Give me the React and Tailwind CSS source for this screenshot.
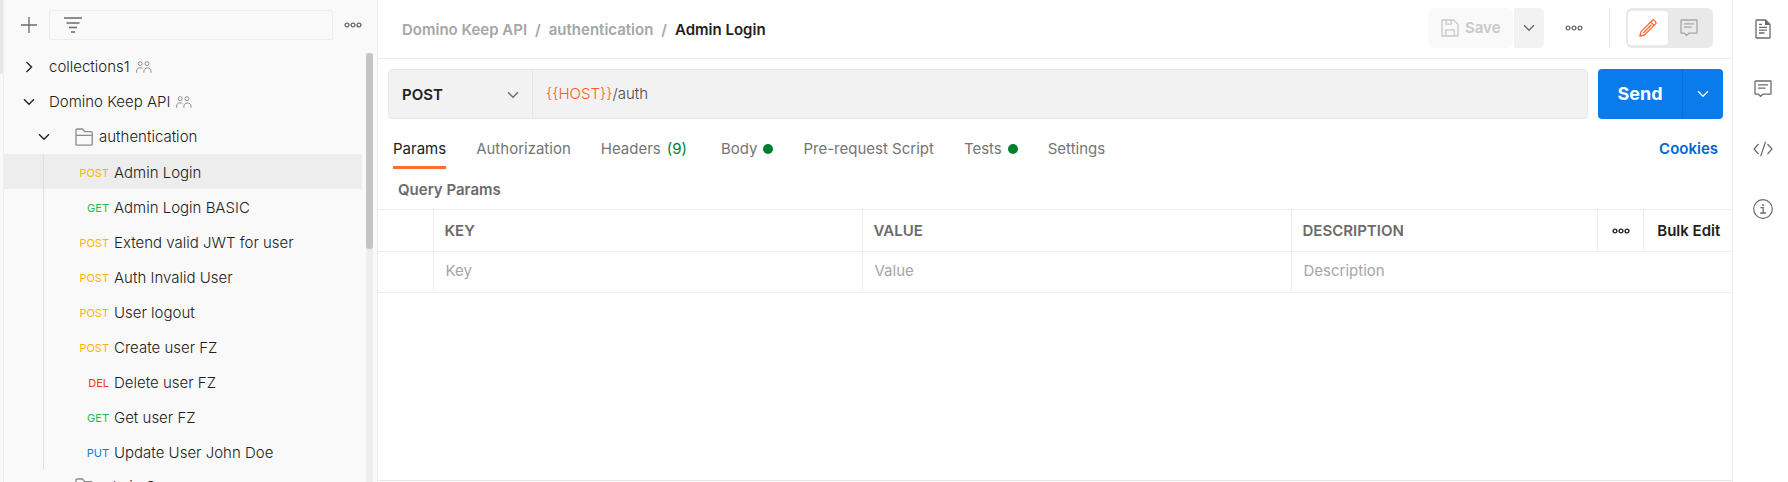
import React from "react";

const COLORS = {
  POST: "text-[#ffb400]",
  GET: "text-[#1db954]",
  DEL: "text-[#f0352b]",
  PUT: "text-[#097bed]",
};

const REQUESTS = [
  ["POST", "Admin Login"],
  ["GET", "Admin Login BASIC"],
  ["POST", "Extend valid JWT for user"],
  ["POST", "Auth Invalid User"],
  ["POST", "User logout"],
  ["POST", "Create user FZ"],
  ["DEL", "Delete user FZ"],
  ["GET", "Get user FZ"],
  ["PUT", "Update User John Doe"],
];

function Svg({ w, h, children, className = "" }) {
  return (
    <svg
      width={w}
      height={h}
      viewBox={`0 0 ${w} ${h}`}
      fill="none"
      stroke="currentColor"
      className={`shrink-0 ${className}`}
      aria-hidden="true"
    >
      {children}
    </svg>
  );
}

const Chevron = ({ className }) => (
  <Svg w={12} h={8} className={className}>
    <path d="M1 1.2 6 6.2 11 1.2" strokeWidth="1.4" />
  </Svg>
);

const ChevronRight = ({ className }) => (
  <Svg w={12} h={12} className={className}>
    <path d="M3.5 1 8.5 6 3.5 11" strokeWidth="1.4" />
  </Svg>
);

const Dots = ({ className }) => (
  <Svg w={18} h={6} className={className}>
    <g strokeWidth="1.4">
      <circle cx="3" cy="3" r="1.9" />
      <circle cx="9" cy="3" r="1.9" />
      <circle cx="15" cy="3" r="1.9" />
    </g>
  </Svg>
);

const People = () => (
  <Svg w={16} h={12} className="text-[#8f8f8f]">
    <circle cx="4.2" cy="2.6" r="2" />
    <circle cx="11" cy="2.6" r="2" />
    <path d="M.7 11.8V10C.7 7.9 2 6.8 4 6.8c1 0 1.8.3 2.4.8M7.9 11.8V10.2c0-2 1.4-3.2 3.5-3.2s3.6 1.2 3.6 3.2v1.6" />
  </Svg>
);

const Folder = () => (
  <Svg w={18} h={18} className="text-[#8a8a8a]">
    <path
      d="M1 15.6V2.2C1 1.3 1.3 1 2.2 1h5.200l2.400 2.600h6.200c.9 0 1.200.3 1.200 1.200v11.200c0 .9-.3 1.200-1.200 1.200H2.200c-.9 0-1.200-.3-1.200-1.200zM1 7.300h16.200"
      strokeWidth="1.3"
    />
  </Svg>
);

const Comment = ({ className }) => (
  <Svg w={18} h={18} className={className}>
    <path
      d="M1.6 1h14.8c.4 0 .6.2.6.6v12c0 .4-.2.6-.6.6H8.800L6.600 16.400 4.400 14.200H1.600c-.4 0-.6-.2-.6-.6v-12c0-.4.200-.6.600-.6zM4 4.900h10M4 8.200h7.500"
      strokeWidth="1.3"
    />
  </Svg>
);

const Disk = () => (
  <Svg w={18} h={18}>
    <path
      d="M1 1h11.5L17 5.5V17H1zM4.8 17v-6.2h8.400V17M5 1v4.200h5.200V1"
      strokeWidth="1.3"
      strokeLinejoin="round"
    />
  </Svg>
);

const Pencil = () => (
  <Svg w={18} h={18} className="text-[#ff6c37]">
    <path
      d="M.8 17.2 2 12.600 12.900 1.700c.9-.9 1.700-.9 2.500-.1l1 1c.8.8.8 1.600-.1 2.500L5.400 16zM11.600 3l3.400 3.400M4.200 14 12.400 5.800"
      strokeWidth="1.3"
      strokeLinejoin="round"
    />
  </Svg>
);

const Doc = () => (
  <Svg w={16} h={20}>
    <path
      d="M1.6 1H10.5L15 5.5V18.4c0 .4-.2.6-.6.6H1.600c-.4 0-.6-.2-.6-.6V1.600C1 1.200 1.200 1 1.600 1zM4 5.300h3M4 8.400h8M4 11.200h8M4 14h5.500"
      strokeWidth="1.3"
    />
    <path d="M10 .8V6h5.200z" fill="currentColor" stroke="none" />
  </Svg>
);

const Code = () => (
  <Svg w={20} h={16}>
    <path d="M5.500 3 1 8l4.500 5M14.500 3 19 8l-4.500 5M12.500.8 7.700 15.200" strokeWidth="1.2" />
  </Svg>
);

const Info = () => (
  <Svg w={20} h={20}>
    <circle cx="10" cy="10" r="9.3" strokeWidth="1.2" />
    <path d="M7.500 8.700h2.700v5M7.200 14h5.800" strokeWidth="1.3" />
    <circle cx="10" cy="6" r="1" fill="currentColor" stroke="none" />
  </Svg>
);

const Dot = () => <span className="h-2.5 w-2.5 rounded-full bg-[#007f31]" />;

function Tab({ active, children }) {
  return (
    <button
      role="tab"
      aria-selected={!!active}
      className={`flex h-10 items-center gap-1.5 border-b-3 pt-0.5 ${
        active ? "border-[#ff6c37] text-[#212121]" : "border-transparent text-[#757575]"
      }`}
    >
      {children}
    </button>
  );
}

function Sidebar() {
  return (
    <aside className="flex w-[378px] shrink-0 border-r border-[#ededed] bg-[#f9f9f9]">
      <div className="flex w-1 shrink-0 flex-col border-r border-[#ededed]">
        <div className="h-[74px] bg-[#e6e6e6]" />
      </div>
      <div className="flex min-w-0 flex-1 flex-col">
        <div className="flex h-[49px] shrink-0 items-center">
          <button aria-label="New" className="flex w-[45px] shrink-0 justify-center pl-[5px] text-[#6b6b6b]">
            <Svg w={16} h={16}>
              <path d="M8 0v16M0 8h16" strokeWidth="1.3" />
            </Svg>
          </button>
          <label className="flex h-[30px] min-w-0 flex-1 items-center rounded-xs border border-[#ededed] pl-3.5">
            <Svg w={18} h={16} className="text-[#6b6b6b]">
              <path d="M0 1h18M2.5 6h13M5 10.5h8M7 15h4" strokeWidth="1.3" />
            </Svg>
            <input aria-label="Filter" className="min-w-0 flex-1 bg-transparent px-2 outline-none" />
          </label>
          <button aria-label="More" className="mr-[15px] ml-[11px] text-[#6b6b6b]">
            <Dots />
          </button>
        </div>
        <div className="flex min-h-0 flex-1">
          <ul className="min-w-0 flex-1 overflow-hidden font-light text-[#212121]">
            <li className="flex h-[35px] items-center pt-px">
              <span className="flex w-[45px] justify-center pl-1">
                <ChevronRight />
              </span>
              collections1
              <span className="ml-1.5"><People /></span>
            </li>
            <li>
              <div className="flex h-[35px] items-center pt-px">
                <span className="flex w-[45px] justify-center pl-1">
                  <Chevron />
                </span>
                Domino Keep API
                <span className="ml-1.5"><People /></span>
              </div>
              <ul>
                <li>
                  <div className="flex h-[35px] items-center pt-px pl-[34px]">
                    <Chevron />
                    <span className="mr-1.5 ml-[25px]"><Folder /></span>
                    authentication
                  </div>
                  <ul>
                    {REQUESTS.map(([method, name], i) => (
                      <li key={name} className={`flex h-[35px] pl-[39px] ${i === 0 ? "bg-[#ededed]" : ""}`}>
                        <a href="#request" className="flex flex-1 items-center border-l border-[#e0e0e0] pt-0.5">
                          <span className={`w-[65px] text-right text-[11px] font-normal ${COLORS[method]}`}>{method}</span>
                          <span className="ml-[5px]">{name}</span>
                        </a>
                      </li>
                    ))}
                  </ul>
                </li>
                <li className="flex h-[35px] items-center pt-px pl-[71px]">
                  <span className="mr-1.5"><Folder /></span>
                  admin Scope
                </li>
              </ul>
            </li>
          </ul>
          <div className="mx-1 mt-1 w-[7px] shrink-0 bg-[#ededed]">
            <div className="h-[196px] rounded-[3px] bg-[#c4c4c4]" />
          </div>
        </div>
      </div>
    </aside>
  );
}

function Header() {
  return (
    <header className="flex h-[59px] shrink-0 items-center border-b border-[#ededed] pr-[19px] pb-0.5 pl-6">
      <nav aria-label="Breadcrumb" className="flex flex-1 gap-2 pt-1 font-semibold text-[#a6a6a6]">
        <a href="#collection">Domino Keep API</a>
        <span>/</span>
        <a href="#folder">authentication</a>
        <span>/</span>
        <span className="text-[#212121]">Admin Login</span>
      </nav>
      <button disabled className="flex h-10 w-[85px] items-center gap-1.5 rounded-md bg-[#f9f9f9] pl-[13px] font-semibold text-[#c8c8c8]">
        <Disk />
        Save
      </button>
      <button aria-label="Save options" className="ml-px flex h-10 w-[30px] items-center justify-center rounded-r-md bg-[#f2f2f2] text-[#6b6b6b]">
        <Chevron />
      </button>
      <button aria-label="More actions" className="mx-[21px] text-[#6b6b6b]">
        <Dots />
      </button>
      <div className="ml-[5px] h-10 w-px bg-[#e6e6e6]" />
      <div className="ml-4 flex h-10 w-[87px] rounded-md bg-[#e9e9e9] p-0.5">
        <button aria-label="Edit" className="my-px flex w-10 items-center justify-center rounded bg-white">
          <Pencil />
        </button>
        <button aria-label="Comments" className="flex flex-1 items-center justify-center pr-px text-[#a6a6a6]">
          <Comment />
        </button>
      </div>
    </header>
  );
}

const cell = "border-r border-[#ededed] px-[11px] text-left";
const field = "w-full bg-transparent pb-0.5 pl-px outline-none placeholder:text-[#a6a6a6]";

function Main() {
  return (
    <main className="flex min-w-0 flex-1 flex-col">
      <Header />
      <div className="flex pt-2.5 pr-[9px] pl-2.5">
        <div className="flex h-[50px] flex-1 rounded border border-[#e6e6e6] bg-[#f2f2f2]">
          <button className="flex w-[144px] items-center justify-between border-r border-[#e6e6e6] px-[13px] pt-px font-semibold text-[#212121]">
            POST
            <Chevron className="text-[#6b6b6b]" />
          </button>
          <div
            role="textbox"
            aria-label="Request URL"
            contentEditable
            suppressContentEditableWarning
            className="flex flex-1 items-center pl-[13px] font-light text-[#4a4a4a] outline-none"
          >
            <span className="text-[#ff5a1f]">{"{{HOST}}"}</span>/auth
          </div>
        </div>
        <div className="ml-2.5 flex h-[50px] overflow-hidden rounded bg-[#097bed] text-white">
          <button className="w-[84px] text-lg font-bold">Send</button>
          <button aria-label="Send options" className="flex w-[41px] items-center justify-center border-l border-[#066fd9]">
            <Chevron />
          </button>
        </div>
      </div>
      <div className="flex items-center justify-between pt-2.5 pr-3.5 pl-[15px]">
        <div role="tablist" className="flex gap-[30px]">
          <Tab active>Params</Tab>
          <Tab>Authorization</Tab>
          <Tab>
            Headers <span className="pr-1 text-[#007f31]">(9)</span>
          </Tab>
          <Tab>
            Body <Dot />
          </Tab>
          <Tab>Pre-request Script</Tab>
          <Tab>
            Tests <Dot />
          </Tab>
          <Tab>Settings</Tab>
        </div>
        <a href="#cookies" className="font-semibold text-[#0265d2]">Cookies</a>
      </div>
      <h2 className="flex h-10 items-center pt-0.5 pl-5 font-semibold text-[#6b6b6b]">Query Params</h2>
      <table className="w-full table-fixed border-collapse border-y border-[#ededed]">
        <colgroup>
          <col className="w-[55px]" />
          <col />
          <col />
          <col className="w-[306px]" />
          <col className="w-[46px]" />
          <col className="w-[89px]" />
        </colgroup>
        <thead>
          <tr className="h-[42px] border-b border-[#ededed] text-[#6b6b6b]">
            <td className={cell} />
            <th className={`${cell} font-semibold`}>KEY</th>
            <th className={`${cell} font-semibold`}>VALUE</th>
            <th className={`${cell} font-semibold`}>DESCRIPTION</th>
            <td className="border-r border-[#ededed] text-center">
              <button aria-label="Columns" className="flex w-full justify-center pl-px text-[#212121]">
                <Dots />
              </button>
            </td>
            <td className="pl-0.5 text-center">
              <button className="font-semibold text-[#212121]">Bulk Edit</button>
            </td>
          </tr>
        </thead>
        <tbody>
          <tr className="h-[41px]">
            <td className={cell} />
            <td className={cell}>
              <input aria-label="Key" placeholder="Key" className={field} />
            </td>
            <td className={cell}>
              <input aria-label="Value" placeholder="Value" className={field} />
            </td>
            <td colSpan={3} className="px-[11px]">
              <input aria-label="Description" placeholder="Description" className={field} />
            </td>
          </tr>
        </tbody>
      </table>
      <div className="mt-auto h-0.5 border-t border-[#e6e6e6]" />
    </main>
  );
}

function Rail() {
  return (
    <aside className="flex w-14 shrink-0 flex-col items-center border-l border-[#ededed] pl-1 text-[#6b6b6b]">
      <button aria-label="Documentation" className="flex h-[58px] items-center"><Doc /></button>
      <button aria-label="Comments" className="flex h-[62px] items-center"><Comment /></button>
      <button aria-label="Code" className="flex h-[58px] items-center"><Code /></button>
      <button aria-label="Info" className="flex h-[62px] items-center"><Info /></button>
    </aside>
  );
}

export default function App() {
  return (
    <div className="flex h-screen overflow-hidden bg-white font-['Inter',sans-serif] text-[15px] leading-5 whitespace-nowrap">
      <Sidebar />
      <Main />
      <Rail />
    </div>
  );
}
